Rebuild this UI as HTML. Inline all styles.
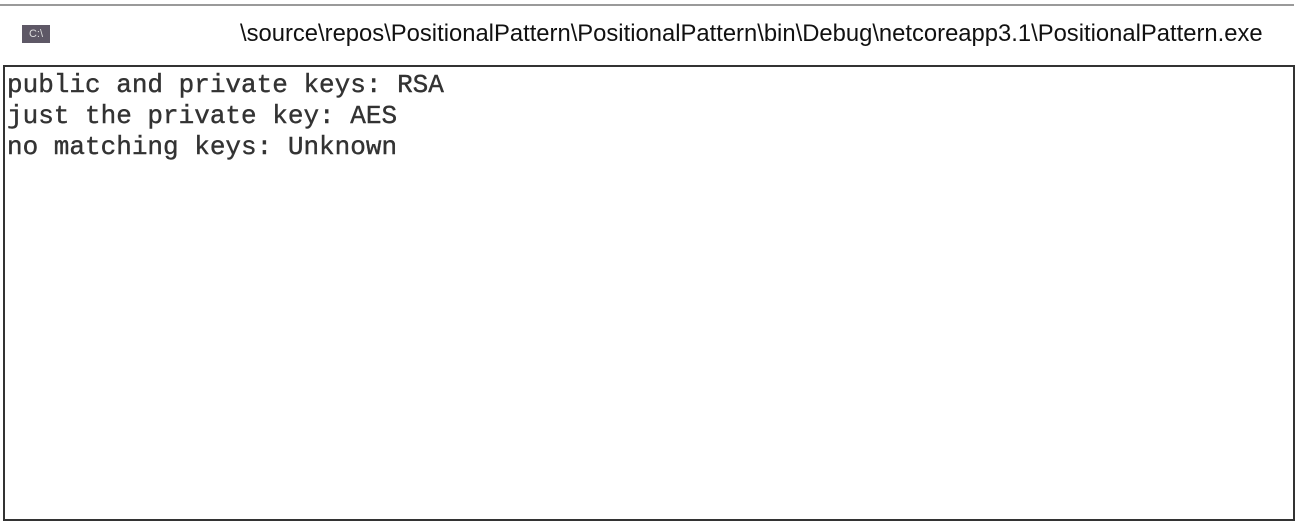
<!DOCTYPE html>
<html><head><style>
body{margin:0;width:1300px;height:526px;background:#fff;position:relative;overflow:hidden;font-family:"Liberation Sans",sans-serif}
.top{position:absolute;left:0;top:4px;width:1294px;height:2px;background:#9a9a9a}
.icon{position:absolute;left:22px;top:25px;width:28px;height:18px;background:#5e5866;color:#ddd;font-size:11px;line-height:18px;text-align:center;font-family:"Liberation Sans",sans-serif}
.title{position:absolute;left:240px;top:20px;font-size:23.8px;color:#111;white-space:nowrap}
.box{position:absolute;left:3px;top:65px;width:1288px;height:452px;border:2px solid #333}
pre{margin:0;position:absolute;left:2px;top:3px;font-family:"Liberation Mono",monospace;font-size:26px;line-height:31px;color:#333;-webkit-text-stroke:0.4px #333}
</style></head><body>
<div class="top"></div>
<div class="icon">C:\</div>
<div class="title">\source\repos\PositionalPattern\PositionalPattern\bin\Debug\netcoreapp3.1\PositionalPattern.exe</div>
<div class="box"><pre>public and private keys: RSA
just the private key: AES
no matching keys: Unknown</pre></div>
</body></html>
